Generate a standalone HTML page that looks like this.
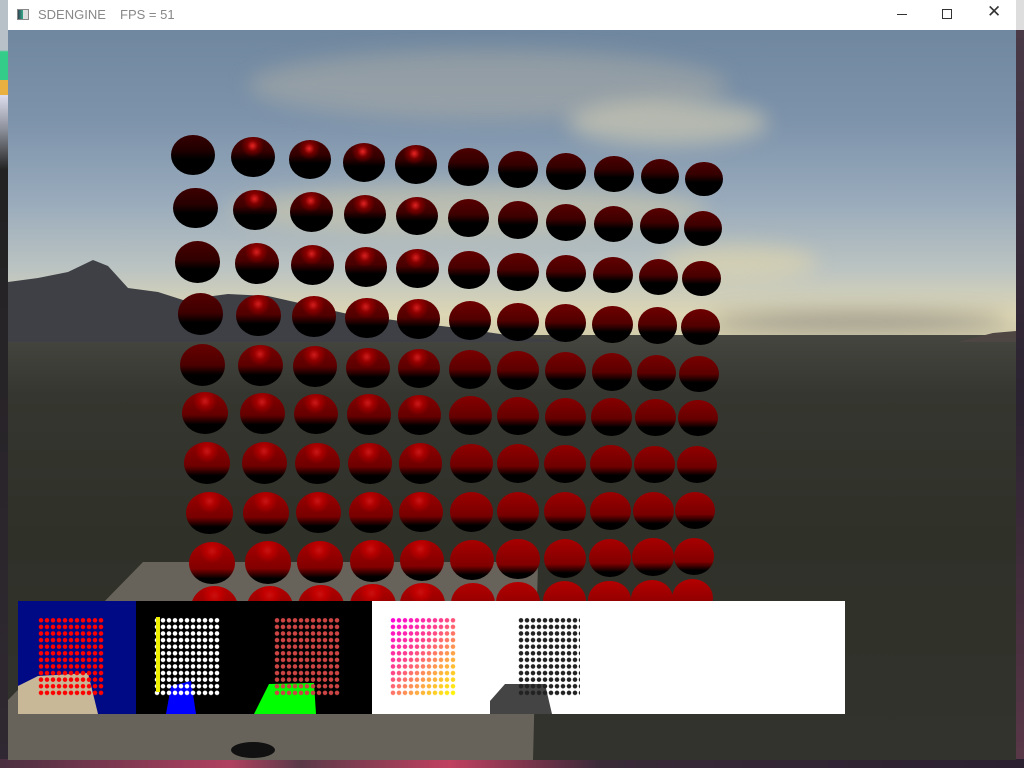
<!DOCTYPE html>
<html><head><meta charset="utf-8"><style>
*{margin:0;padding:0;box-sizing:border-box}
body{width:1024px;height:768px;overflow:hidden;background:#3a2a35;position:relative;font-family:"Liberation Sans",sans-serif}
#left{position:absolute;left:0;top:0;width:8px;height:768px;background:linear-gradient(#b8c0c8 0,#b8c0c8 50px,#3c8 52px,#3c8 80px,#e9b040 80px,#e9b040 95px,#dde 95px,#8a8e98 130px,#222 170px,#302832 768px)}
#right{position:absolute;left:1016px;top:0;width:8px;height:768px;background:linear-gradient(#ddd 0,#ddd 30px,#4a3a48 30px,#2a2230 400px,#5a3848 768px)}
#bottom{position:absolute;left:0;top:759px;width:1024px;height:9px;background:linear-gradient(90deg,#4a3040,#b04060 230px,#5a3a48 300px,#c04060 450px,#3a2a38 600px,#2a2030)}
#win{position:absolute;left:8px;top:0;width:1008px;height:760px;overflow:hidden;background:#3a3a33}
#title{position:absolute;left:0;top:0;width:1008px;height:30px;background:#fff;color:#888;font-size:13px}
#sky{position:absolute;left:0;top:30px;width:1008px;height:320px;background:linear-gradient(#6f879f 0,#7d93ab 90px,#98aabb 170px,#bcc4c2 240px,#ddd6b4 285px,#cfc8a8 315px)}
#ground{position:absolute;left:0;top:335px;width:1008px;height:425px;background:linear-gradient(#45463f 0,#35362f 60px,#2f3129 200px,#32332c 425px)}
.cloud{position:absolute;border-radius:50%;filter:blur(10px)}
.s{position:absolute;border-radius:50%}
.p{position:absolute;top:601px;height:113px;width:118px}
.dots{position:absolute}
</style></head><body>
<div id="left"></div><div id="right"></div><div id="bottom"></div>
<div id="win">
 <div id="sky"></div>
 <div class="cloud" style="left:240px;top:50px;width:480px;height:70px;background:rgba(200,190,165,.35)"></div>
 <div class="cloud" style="left:560px;top:100px;width:200px;height:45px;background:rgba(225,215,180,.55)"></div>
 <div class="cloud" style="left:220px;top:185px;width:480px;height:50px;background:rgba(225,210,165,.45)"></div>
 <div class="cloud" style="left:650px;top:245px;width:160px;height:35px;background:rgba(235,220,165,.5)"></div>
 <div class="cloud" style="left:700px;top:312px;width:300px;height:18px;background:rgba(100,100,105,.55)"></div>
 <div id="ground"></div>
 <svg style="position:absolute;left:0;top:0" width="1008" height="760">
  <polygon points="0,282 30,278 60,272 85,260 100,266 120,288 150,292 175,300 220,294 260,296 300,305 340,314 400,322 450,328 520,338 560,342 0,342" fill="#3e4046"/>
  <polygon points="950,342 985,333 1008,331 1008,342" fill="#4e4642"/>
  <polygon points="135,562 530,562 525,760 0,760 0,700" fill="#67635a"/>
  <ellipse cx="245" cy="750" rx="22" ry="8" fill="#111"/>
 </svg>
 <div id="spheres"></div>
 <div class="p" style="left:10px;background:#000a84"><svg width="118" height="113"><polygon points="0,113 0,85 20,75 70,72 80,113" fill="#c8b898"/></svg><div class="dots" style="left:20px;top:16px;width:66px;height:80px;background:radial-gradient(circle,#f00 2px,transparent 2.5px) 0 0/6px 6.6px"></div></div>
 <div class="p" style="left:128px;background:#000"><svg width="118" height="113"><polygon points="30,113 35,85 55,80 60,113" fill="#00f"/></svg><div class="dots" style="left:18px;top:16px;width:66px;height:80px;background:radial-gradient(circle,#fff 2px,transparent 2.5px) 0 0/6px 6.6px"></div><div class="dots" style="left:20px;top:16px;width:4px;height:75px;background:#ee0"></div></div>
 <div class="p" style="left:246px;background:#000"><svg width="118" height="113"><polygon points="0,113 15,83 60,82 62,113" fill="#0f0"/></svg><div class="dots" style="left:20px;top:16px;width:66px;height:80px;background:radial-gradient(circle,#c44 2px,transparent 2.5px) 0 0/6px 6.6px"></div></div>
 <div class="p" style="left:364px;background:#fff"><div class="dots" style="left:18px;top:16px;width:66px;height:80px;background:radial-gradient(circle,rgba(255,255,255,0) 2px,#fff 2.5px) 0 0/6px 6.6px,linear-gradient(135deg,#f0d 0,#f48 40%,#fa4 70%,#ff0)"></div></div>
 <div class="p" style="left:482px;background:#fff"><svg width="118" height="113"><polygon points="0,113 0,100 15,83 55,83 62,113" fill="#444"/></svg><div class="dots" style="left:28px;top:16px;width:62px;height:80px;background:radial-gradient(circle,#222 2px,transparent 2.5px) 0 0/6px 6.6px"></div></div>
 <div class="p" style="left:600px;width:237px;background:#fff"></div>
 <div id="title"><span style="position:absolute;left:9px;top:9px;width:12px;height:11px;border:1px solid #888;background:linear-gradient(90deg,#345 0,#3a8 50%,#ddd 50%)"></span><span style="position:absolute;left:30px;top:7px">SDENGINE</span><span style="position:absolute;left:112px;top:7px">FPS = 51</span>
 <span style="position:absolute;left:889px;top:14px;width:10px;height:1px;background:#333"></span>
 <span style="position:absolute;left:934px;top:9px;width:10px;height:10px;border:1px solid #333"></span>
 <span style="position:absolute;left:979px;top:2px;font-size:17px;color:#333">✕</span></div>
</div>
<script>
var h='',rows=[155,208,262,314,365,413,463,513,563,608];
var c0=[193,253,310,364,416,468,518,566,614,660,704],c8=[212,268,320,372,422,472,518,565,610,653,694];
for(var i=0;i<10;i++){var t=i/9,t8=i/8;
 var y0=rows[i],dy=24*(1-t)-10*t;
 for(var j=0;j<11;j++){var u=j/10;var x=c0[j]+(c8[j]-c0[j])*t8,y=y0+dy*u;
  var r=22-u*3+t*1.5;
  var b=Math.min(1,0.2+t*0.8);
  if(j==0&&i<5)b*=0.15+i*0.15;
  var base='rgb('+Math.round(50+130*b)+',0,0)',mid='rgb('+Math.round(30+110*b)+',0,0)';
  var hx=50-u*10,hy=22;
  var spec=(u<0.5&&!(j==0&&i<5))?'radial-gradient(circle at '+hx+'% '+hy+'%,rgba(255,40,40,'+(0.9-t*0.5)+') 0,rgba(255,0,0,0.3) 14%,rgba(0,0,0,0) 30%),':'';
  var ds=Math.round(52+t*30);
  h+='<div class="s" style="left:'+(x-r-8)+'px;top:'+(y-r*0.92)+'px;width:'+(2*r)+'px;height:'+(1.84*r)+'px;background:'+spec+'linear-gradient('+base+' 0,'+mid+' '+(ds-15)+'%,#000 '+(ds+8)+'%)"></div>';}}
document.getElementById('spheres').innerHTML=h;
</script>
</body></html>
